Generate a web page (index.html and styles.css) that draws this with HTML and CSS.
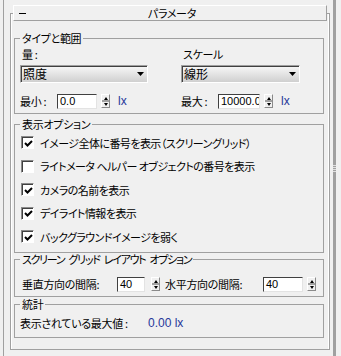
FILE: index.html
```html
<!DOCTYPE html>
<html lang="ja">
<head>
    <meta charset="UTF-8">
    <meta name="viewport" content="width=device-width, initial-scale=1.0">
    <title>パラメータ</title>
    <link rel="stylesheet" href="styles.css">
</head>
<body>
    <div class="app">
        <div class="edge"></div>
        <div class="rollout">
            <div class="rollout-header">
                <span class="collapse"></span>
                <span class="rollout-title">パラメータ</span>
            </div>

            <fieldset class="group group-range">
                <legend>タイプと範囲</legend>
                <div class="range-grid">
                    <div class="range-cell">
                        <div class="field-label">量 :</div>
                        <div class="dropdown dropdown-quantity">
                            <span>照度</span>
                            <svg class="arrow" width="7" height="4" viewBox="0 0 7 4"><path d="M0 0h7L3.5 4z"/></svg>
                        </div>
                        <div class="spin-row">
                            <span class="spin-label">最小 :</span>
                            <span class="num-input num-range">0.0</span>
                            <span class="spinner"><span class="spin-up"></span><span class="spin-down"></span></span>
                            <span class="unit">lx</span>
                        </div>
                    </div>
                    <div class="range-cell">
                        <div class="field-label">スケール</div>
                        <div class="dropdown dropdown-scale">
                            <span>線形</span>
                            <svg class="arrow" width="7" height="4" viewBox="0 0 7 4"><path d="M0 0h7L3.5 4z"/></svg>
                        </div>
                        <div class="spin-row">
                            <span class="spin-label">最大 :</span>
                            <span class="num-input num-range num-wide">10000.0</span>
                            <span class="spinner"><span class="spin-up"></span><span class="spin-down"></span></span>
                            <span class="unit">lx</span>
                        </div>
                    </div>
                </div>
            </fieldset>

            <fieldset class="group group-display">
                <legend>表示オプション</legend>
                <div class="check-row">
                    <span class="checkbox checked"><svg width="9" height="9" viewBox="0 0 9 9"><path d="M1 4l2.5 2.5L8 2"/></svg></span>
                    <span>イメージ全体に番号を表示（スクリーングリッド）</span>
                </div>
                <div class="check-row">
                    <span class="checkbox"></span>
                    <span>ライトメータ ヘルパー オブジェクトの番号を表示</span>
                </div>
                <div class="check-row">
                    <span class="checkbox checked"><svg width="9" height="9" viewBox="0 0 9 9"><path d="M1 4l2.5 2.5L8 2"/></svg></span>
                    <span>カメラの名前を表示</span>
                </div>
                <div class="check-row">
                    <span class="checkbox checked"><svg width="9" height="9" viewBox="0 0 9 9"><path d="M1 4l2.5 2.5L8 2"/></svg></span>
                    <span>デイライト情報を表示</span>
                </div>
                <div class="check-row">
                    <span class="checkbox checked"><svg width="9" height="9" viewBox="0 0 9 9"><path d="M1 4l2.5 2.5L8 2"/></svg></span>
                    <span>バックグラウンドイメージを弱く</span>
                </div>
            </fieldset>

            <fieldset class="group group-grid">
                <legend>スクリーン グリッド レイアウト オプション</legend>
                <div class="spin-row">
                    <span class="spin-label label-vertical">垂直方向の間隔:</span>
                    <span class="num-input num-spacing">40</span>
                    <span class="spinner"><span class="spin-up"></span><span class="spin-down"></span></span>
                    <span class="spin-label label-horizontal">水平方向の間隔:</span>
                    <span class="num-input num-spacing num-wide">40</span>
                    <span class="spinner"><span class="spin-up"></span><span class="spin-down"></span></span>
                </div>
            </fieldset>

            <fieldset class="group group-stats">
                <legend>統計</legend>
                <div class="stat-row">
                    <span class="stat-label">表示されている最大値 :</span>
                    <span class="stat-value">0.00 lx</span>
                </div>
            </fieldset>
        </div>
        <div class="scrollbar"><div class="grip"></div></div>
    </div>
</body>
</html>
```

FILE: styles.css
```css
body {
    margin: 0;
    background-color: #f0f0f0;
    font-family: "Noto Sans CJK JP", sans-serif;
    font-size: 11px;
    font-feature-settings: "palt";
    letter-spacing: -0.3px;
    color: #000;
}

.app {
    display: flex;
    width: 341px;
    height: 356px;
}

.edge {
    width: 1px;
    margin-left: 3px;
    background-color: #a0a0a0;
}

.rollout {
    box-sizing: border-box;
    width: 320px;
    height: 337px;
    margin: 13px 0 0 6px;
    border: 1px solid #a0a0a0;
    box-shadow: inset 1px 0 #fff, inset -1px 0 #fff;
}

.rollout-header {
    display: flex;
    align-items: center;
    box-sizing: border-box;
    height: 16px;
    margin: -9px 2px 0 2px;
    border: 1px solid;
    border-color: #fff #a0a0a0 #a0a0a0 #fff;
    background-color: #f0f0f0;
}

.collapse {
    width: 7px;
    height: 1px;
    margin-left: 5px;
    background-color: #000;
}

.rollout-title {
    flex: 1;
    padding-right: 8px;
    text-align: center;
    line-height: 14px;
}

/* group boxes */
.group {
    min-width: 0;
    margin: 0 5px 0 3px;
    padding: 0 5px 4px 5px;
    border: 1px solid #a0a0a0;
}

.group legend {
    height: 13px;
    padding: 0 2px;
    line-height: 13px;
}

.group-range {
    margin-top: 11px;
}

.group-display {
    margin-top: 4px;
    padding-bottom: 3.5px;
}

.group-grid {
    margin-top: 0;
}

.group-grid legend {
    letter-spacing: -1.3px;
    word-spacing: 3px;
}

.group-stats {
    margin-top: 1px;
    padding-bottom: 6px;
}

/* type and range */
.range-grid {
    display: grid;
    grid-template-columns: 161px 1fr;
}

.range-cell {
    display: flex;
    flex-direction: column;
}

.field-label {
    height: 15px;
    margin-top: 2px;
    padding-left: 2px;
    line-height: 15px;
}

.dropdown {
    display: flex;
    align-items: center;
    justify-content: space-between;
    box-sizing: border-box;
    height: 18px;
    margin-top: 3px;
    padding: 0 3px 0 2px;
    border: 1px solid;
    border-color: #a0a0a0 #fff #fff #a0a0a0;
    box-shadow: inset 1px 1px #404040;
    background: linear-gradient(#f8f8f8, #d0d0d0);
    font-size: 12px;
    letter-spacing: 0;
    line-height: 16px;
}

.dropdown-quantity {
    width: 128px;
}

.dropdown-scale {
    width: 119px;
}

.arrow {
    display: block;
}

.spin-row {
    display: flex;
    align-items: center;
    height: 16px;
    margin-top: 10px;
    line-height: 16px;
}

.spin-label {
    width: 37px;
    flex-shrink: 0;
}

.num-input {
    box-sizing: border-box;
    height: 15px;
    padding-left: 2px;
    overflow: hidden;
    border: 1px solid;
    border-color: #404040 #e3e3e3 #e3e3e3 #404040;
    background-color: #fff;
    font-family: "Liberation Sans", sans-serif;
    font-size: 11px;
    letter-spacing: 0;
    line-height: 13px;
    white-space: nowrap;
}

.num-range {
    width: 40px;
}

.num-range.num-wide {
    width: 42px;
}

.spinner {
    display: flex;
    flex-direction: column;
    justify-content: space-around;
    align-items: center;
    box-sizing: border-box;
    width: 9px;
    height: 14px;
    margin-left: 4px;
    border: 1px solid;
    border-color: #fff #8a8a8a #8a8a8a #fff;
    background: linear-gradient(#f0f0f0 45%, #a0a0a0 45%, #a0a0a0 55%, #f0f0f0 55%);
}

.spin-up,
.spin-down {
    width: 0;
    height: 0;
    border-left: 2px solid transparent;
    border-right: 2px solid transparent;
}

.spin-up {
    border-bottom: 3px solid #000;
}

.spin-down {
    border-top: 3px solid #000;
}

.unit {
    margin-left: 8px;
    color: #26379a;
    font-family: "Liberation Sans", sans-serif;
    font-size: 12px;
    letter-spacing: 0;
}

/* display options */
.check-row {
    display: flex;
    align-items: center;
    height: 23.5px;
    letter-spacing: -0.55px;
}

.checkbox {
    display: flex;
    align-items: center;
    justify-content: center;
    box-sizing: border-box;
    width: 13px;
    height: 13px;
    margin: 0 6px 0 1px;
    border: 1px solid;
    border-color: #8a8a8a #fff #fff #8a8a8a;
    box-shadow: inset 1px 1px #404040;
    background-color: #fff;
}

.checkbox svg {
    display: none;
}

.checkbox.checked svg {
    display: block;
    margin: 1px 0 0 1px;
    fill: none;
    stroke: #000;
    stroke-width: 2;
}

/* screen grid layout */
.label-vertical {
    width: 95px;
    padding-left: 2px;
}

.label-horizontal {
    width: 98px;
    margin-left: 5px;
}

.num-spacing {
    width: 28px;
}

.num-spacing.num-wide {
    width: 40px;
}

.group-grid .spinner {
    margin-left: 6px;
}

.group-grid .spinner:last-child {
    margin-left: 4px;
}

/* stats */
.stat-row {
    display: flex;
    height: 16px;
    margin-top: 4px;
    line-height: 16px;
}

.stat-label {
    width: 128px;
}

.stat-value {
    color: #26379a;
    font-family: "Liberation Sans", sans-serif;
    font-size: 12px;
    letter-spacing: 0;
}

.scrollbar {
    width: 3px;
    margin-left: 3px;
    background-color: #a0a0a0;
}

.grip {
    height: 8px;
    margin-top: 165px;
    background: repeating-linear-gradient(#e0e0e0 0 1px, #a0a0a0 1px 2px);
}
```
